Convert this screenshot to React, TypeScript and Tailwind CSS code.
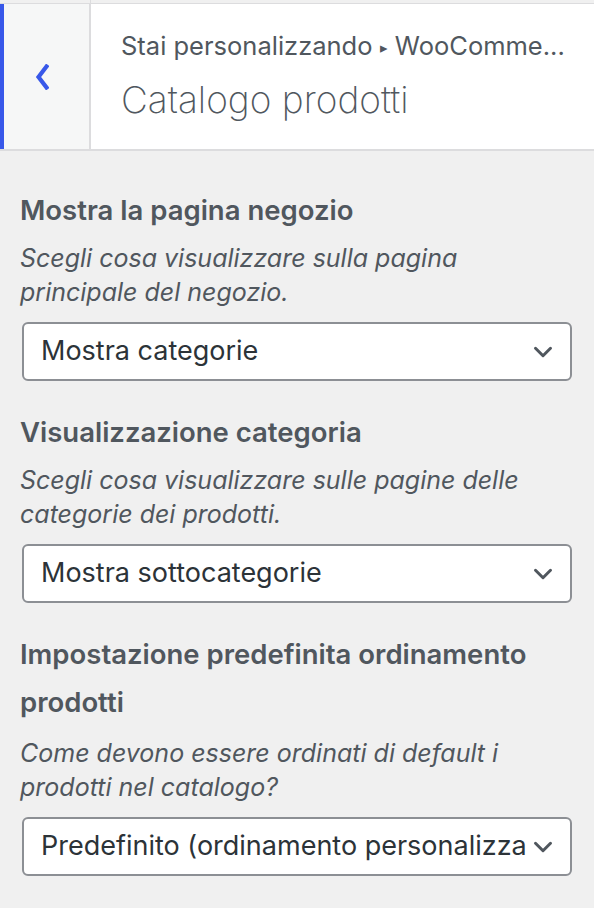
import { ChevronDown } from "lucide-react";

const sections = [
    {
        title: "Mostra la pagina negozio",
        desc: "Scegli cosa visualizzare sulla pagina principale del negozio.",
        value: "Mostra categorie",
    },
    {
        title: "Visualizzazione categoria",
        desc: "Scegli cosa visualizzare sulle pagine delle categorie dei prodotti.",
        value: "Mostra sottocategorie",
    },
    {
        title: "Impostazione predefinita ordinamento prodotti",
        desc: "Come devono essere ordinati di default i prodotti nel catalogo?",
        value: "Predefinito (ordinamento personalizzato + nome)",
    },
];

export default function App() {
    return (
        <div className="w-[594px] h-[908px] overflow-hidden bg-[#f0f0f0] font-['Inter','Roboto',sans-serif] text-[#50575e]">
            <div className="flex h-[4px] border-b border-[#dcdcde]">
                <div className="w-[91px] border-r border-[#dcdcde]"></div>
            </div>
            <div className="flex h-[147px] bg-white border-b-2 border-[#dcdcde]">
                <button className="w-[91px] flex items-center justify-center pr-[10px] bg-[#f6f7f7] border-l-4 border-[#3858e9] border-r-2 border-r-[#dcdcde] text-[#3858e9]">
                    <svg width="14" height="26" viewBox="0 0 14 26" fill="none">
                        <path d="M11.5 2.5 L3.5 13 L11.5 23.5" stroke="currentColor" strokeWidth="4.2" strokeLinecap="square" strokeLinejoin="miter" />
                    </svg>
                </button>
                <div className="flex flex-col justify-center pl-[30px] pb-[2px]">
                    <span className="text-[25.5px] leading-[30px] text-[#50575e] whitespace-nowrap">
                        Stai personalizzando <span className="text-[15px] align-middle">▸</span> WooComme...
                    </span>
                    <h3 className="mt-[16px] text-[37px] leading-[40px] font-extralight text-[#50575e]">
                        Catalogo prodotti
                    </h3>
                </div>
            </div>
            <div className="px-[20px] pt-[35px]">
                {sections.map((s, i) => (
                    <div key={s.title} className="mb-[27px]">
                        <h4 className="text-[27.5px] leading-[48px] font-semibold text-[#50575e]">
                            {s.title}
                        </h4>
                        <p className={`${i === 2 ? "mt-[10px]" : "mt-[7px]"} text-[25px] leading-[34px] italic text-[#50575e] pr-[8px]`}>
                            {s.desc}
                        </p>
                        <div className="mt-[13px] mx-[2px] h-[59px] flex items-center rounded-[6px] border-2 border-[#8c8f94] bg-white pl-[17px] pr-[12px]">
                            <span className="flex-1 overflow-hidden whitespace-nowrap text-[27px] text-[#2c3338]">
                                {s.value}
                            </span>
                            <ChevronDown size={30} strokeWidth={2.4} className="ml-[2px] text-[#50575e] shrink-0" />
                        </div>
                    </div>
                ))}
            </div>
        </div>
    );
}
